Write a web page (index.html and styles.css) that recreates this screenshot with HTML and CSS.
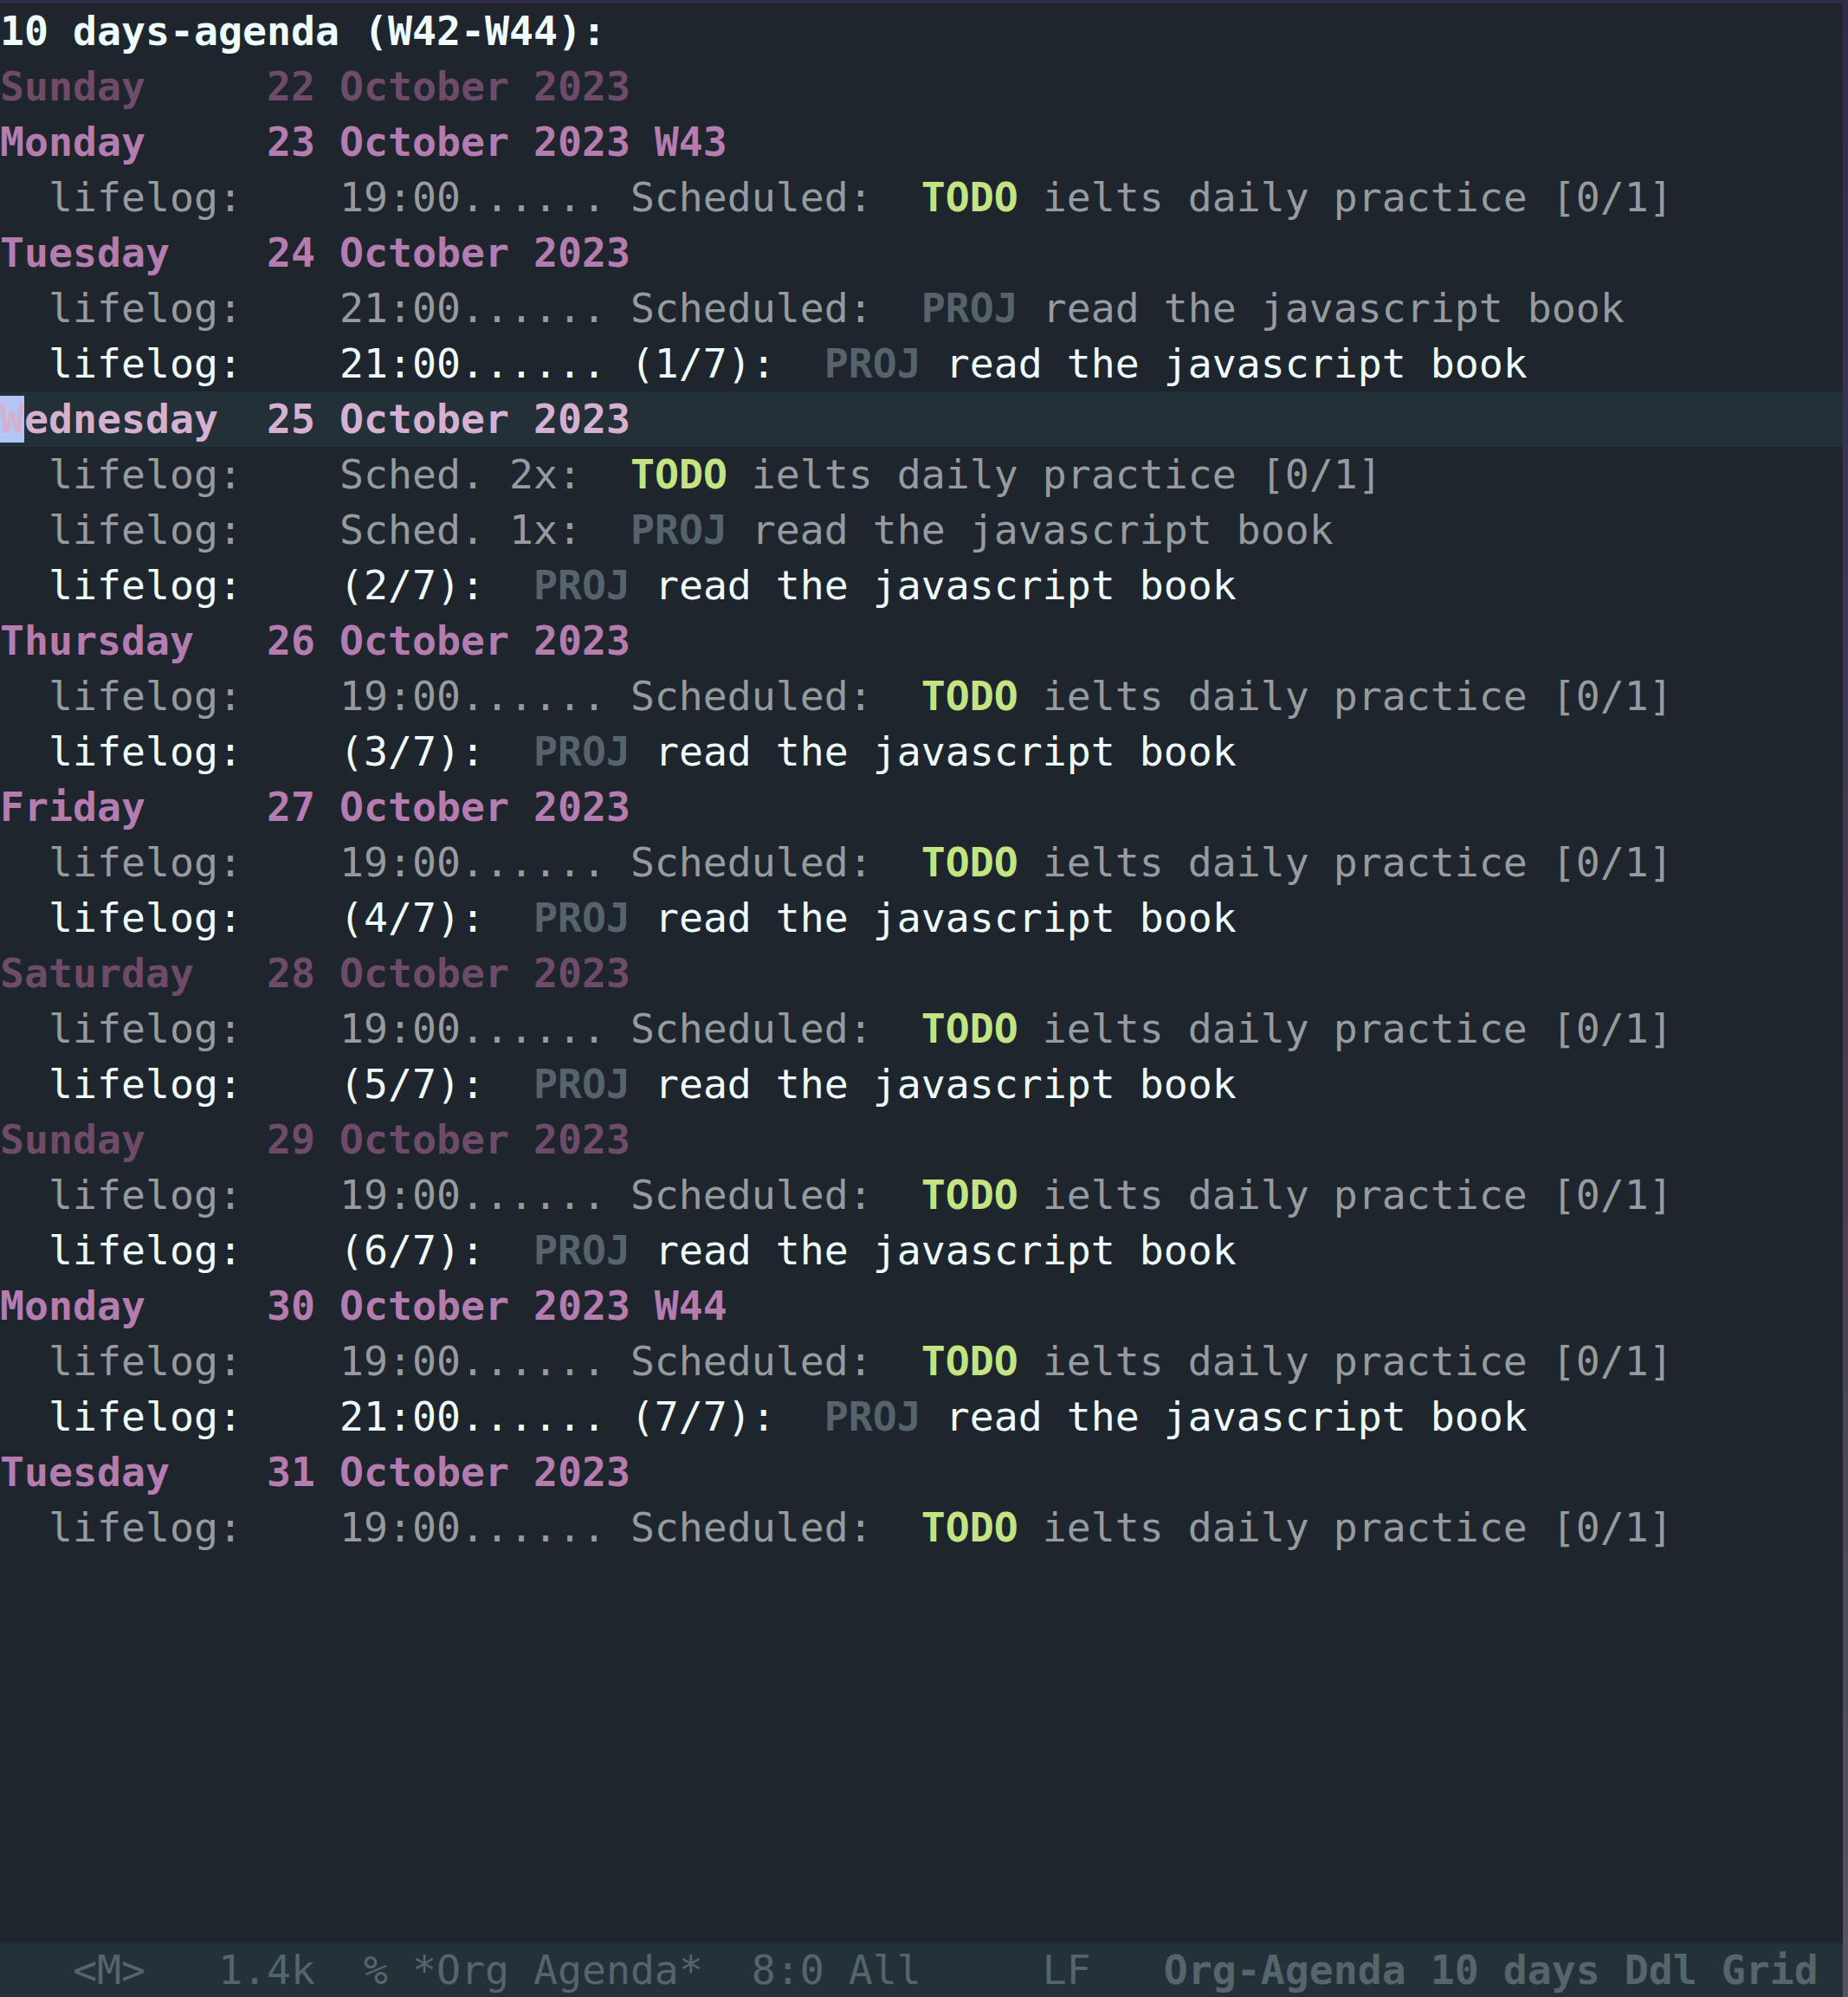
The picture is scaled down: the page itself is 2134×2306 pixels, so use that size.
FILE: index.html
```html
<!DOCTYPE html>
<html lang="en">
<head>
<meta charset="utf-8">
<title>*Org Agenda*</title>
<link rel="stylesheet" href="styles.css">
</head>
<body>
<div class="screen">
  <main class="buffer">
    <div class="line title">10 days-agenda (W42-W44):</div>
    <div class="line day weekend">Sunday     22 October 2023</div>
    <div class="line day">Monday     23 October 2023 W43</div>
    <div class="line item">  lifelog:    19:00...... Scheduled:  <span class="todo">TODO</span> ielts daily practice [0/1]</div>
    <div class="line day">Tuesday    24 October 2023</div>
    <div class="line item">  lifelog:    21:00...... Scheduled:  <span class="proj">PROJ</span> read the javascript book</div>
    <div class="line item bright">  lifelog:    21:00...... (1/7):  <span class="proj">PROJ</span> read the javascript book</div>
    <div class="line day today current"><span class="cursor">W</span>ednesday  25 October 2023</div>
    <div class="line item">  lifelog:    Sched. 2x:  <span class="todo">TODO</span> ielts daily practice [0/1]</div>
    <div class="line item">  lifelog:    Sched. 1x:  <span class="proj">PROJ</span> read the javascript book</div>
    <div class="line item bright">  lifelog:    (2/7):  <span class="proj">PROJ</span> read the javascript book</div>
    <div class="line day">Thursday   26 October 2023</div>
    <div class="line item">  lifelog:    19:00...... Scheduled:  <span class="todo">TODO</span> ielts daily practice [0/1]</div>
    <div class="line item bright">  lifelog:    (3/7):  <span class="proj">PROJ</span> read the javascript book</div>
    <div class="line day">Friday     27 October 2023</div>
    <div class="line item">  lifelog:    19:00...... Scheduled:  <span class="todo">TODO</span> ielts daily practice [0/1]</div>
    <div class="line item bright">  lifelog:    (4/7):  <span class="proj">PROJ</span> read the javascript book</div>
    <div class="line day weekend">Saturday   28 October 2023</div>
    <div class="line item">  lifelog:    19:00...... Scheduled:  <span class="todo">TODO</span> ielts daily practice [0/1]</div>
    <div class="line item bright">  lifelog:    (5/7):  <span class="proj">PROJ</span> read the javascript book</div>
    <div class="line day weekend">Sunday     29 October 2023</div>
    <div class="line item">  lifelog:    19:00...... Scheduled:  <span class="todo">TODO</span> ielts daily practice [0/1]</div>
    <div class="line item bright">  lifelog:    (6/7):  <span class="proj">PROJ</span> read the javascript book</div>
    <div class="line day">Monday     30 October 2023 W44</div>
    <div class="line item">  lifelog:    19:00...... Scheduled:  <span class="todo">TODO</span> ielts daily practice [0/1]</div>
    <div class="line item bright">  lifelog:    21:00...... (7/7):  <span class="proj">PROJ</span> read the javascript book</div>
    <div class="line day">Tuesday    31 October 2023</div>
    <div class="line item">  lifelog:    19:00...... Scheduled:  <span class="todo">TODO</span> ielts daily practice [0/1]</div>
  </main>
  <footer class="modeline">   &lt;M&gt;   1.4k  % *Org Agenda*  8:0 All     LF   <span class="mode">Org-Agenda 10 days Ddl Grid</span></footer>
</div>
</body>
</html>
```

FILE: styles.css
```css
html, body {
  margin: 0;
  padding: 0;
  background: #1f252c;
  overflow: hidden;
}

.screen {
  box-sizing: border-box;
  width: 2134px;
  height: 2306px;
  display: flex;
  flex-direction: column;
  border-top: 4px solid #2b2a40;
  border-right: 6px solid #3f3a52;
  border-image: linear-gradient(180deg, #2f2b48 0%, #3b3656 30%, #4b3a4a 55%, #4a4a5a 80%, #57525f 100%) 1;
  border-left: 0;
  border-bottom: 0;
  font-family: "DejaVu Sans Mono", "Liberation Mono", monospace;
  font-size: 46.5px;
  color: #959b9f;
  background: #1f252c;
}

.buffer {
  flex: 1;
  display: flex;
  flex-direction: column;
}

.line {
  height: 64px;
  line-height: 64px;
  white-space: pre;
}

.title {
  color: #effcfc;
  font-weight: bold;
}

.day {
  color: #b57caf;
  font-weight: bold;
}

.day.weekend {
  color: #6e4b68;
}

.day.today {
  color: #d6b0d1;
}

.current {
  background: #243037;
}

.cursor {
  background: #b3c6f6;
  color: #d6b0d1;
}

.item {
  color: #959b9f;
}

.item.bright {
  color: #eefcfc;
}

.todo {
  color: #c4e484;
  font-weight: bold;
}

.proj {
  color: #56636b;
  font-weight: bold;
}

.modeline {
  height: 62px;
  line-height: 62px;
  white-space: pre;
  background: #253138;
  color: #56646c;
}

.mode {
  font-weight: bold;
}
```
